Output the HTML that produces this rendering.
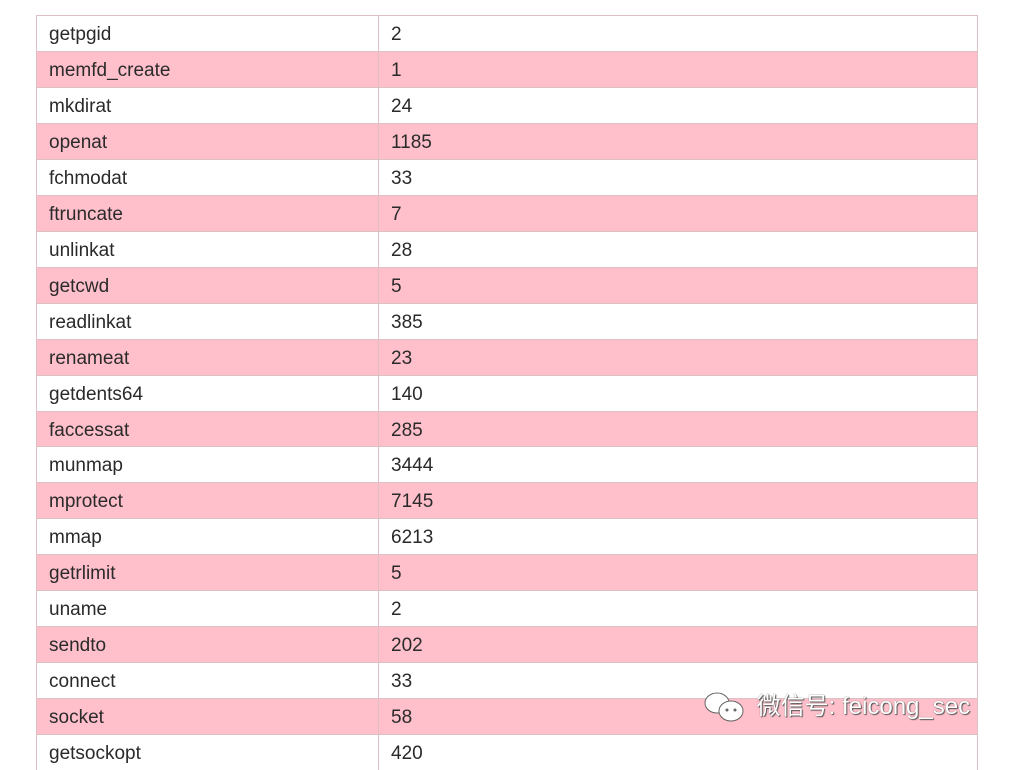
<!DOCTYPE html>
<html><head><meta charset="utf-8"><style>
body{margin:0;width:1014px;height:750px;overflow:hidden;background:#fff;font-family:"Liberation Sans","Noto Sans CJK SC",sans-serif;}
.r{position:absolute;left:36px;width:940px;height:35px;border:1px solid #dcc0c4;border-bottom:none;font-size:19px;color:#2a2a2a;}
.r.p{background:#ffc0cb;}
.r span{position:absolute;top:8px;}
.a{left:12px}.b{left:354px}
.d{position:absolute;left:341px;top:0;bottom:0;border-left:1px solid #dcc0c4;}
.wm{position:absolute;left:702px;top:686px;font-size:24px;color:#fff;text-shadow:0 0 1px #555,1px 1px 1px #555;white-space:nowrap}
</style></head><body>
<div id="t"></div>
<script>
var d=[["getpgid",2],["memfd_create",1],["mkdirat",24],["openat",1185],["fchmodat",33],["ftruncate",7],["unlinkat",28],["getcwd",5],["readlinkat",385],["renameat",23],["getdents64",140],["faccessat",285],["munmap",3444],["mprotect",7145],["mmap",6213],["getrlimit",5],["uname",2],["sendto",202],["connect",33],["socket",58],["getsockopt",420]];
var h="";d.forEach(function(x,i){h+='<div class="r'+(i%2?' p':'')+'" style="top:'+(15+i*35.95).toFixed(1)+'px"><div class="d"></div><span class="a">'+x[0]+'</span><span class="b">'+x[1]+'</span></div>';});
document.getElementById("t").innerHTML=h;
</script>
<div class="wm"><svg width="48" height="34" viewBox="0 0 44 34" style="vertical-align:middle"><ellipse cx="13" cy="12" rx="12" ry="10" fill="#fff" stroke="#666"/><ellipse cx="27" cy="20" rx="12" ry="10" fill="#fff" stroke="#666"/><circle cx="23" cy="19" r="1.5" fill="#666"/><circle cx="31" cy="19" r="1.5" fill="#666"/></svg> 微信号: feicong_sec</div>
</body></html>
